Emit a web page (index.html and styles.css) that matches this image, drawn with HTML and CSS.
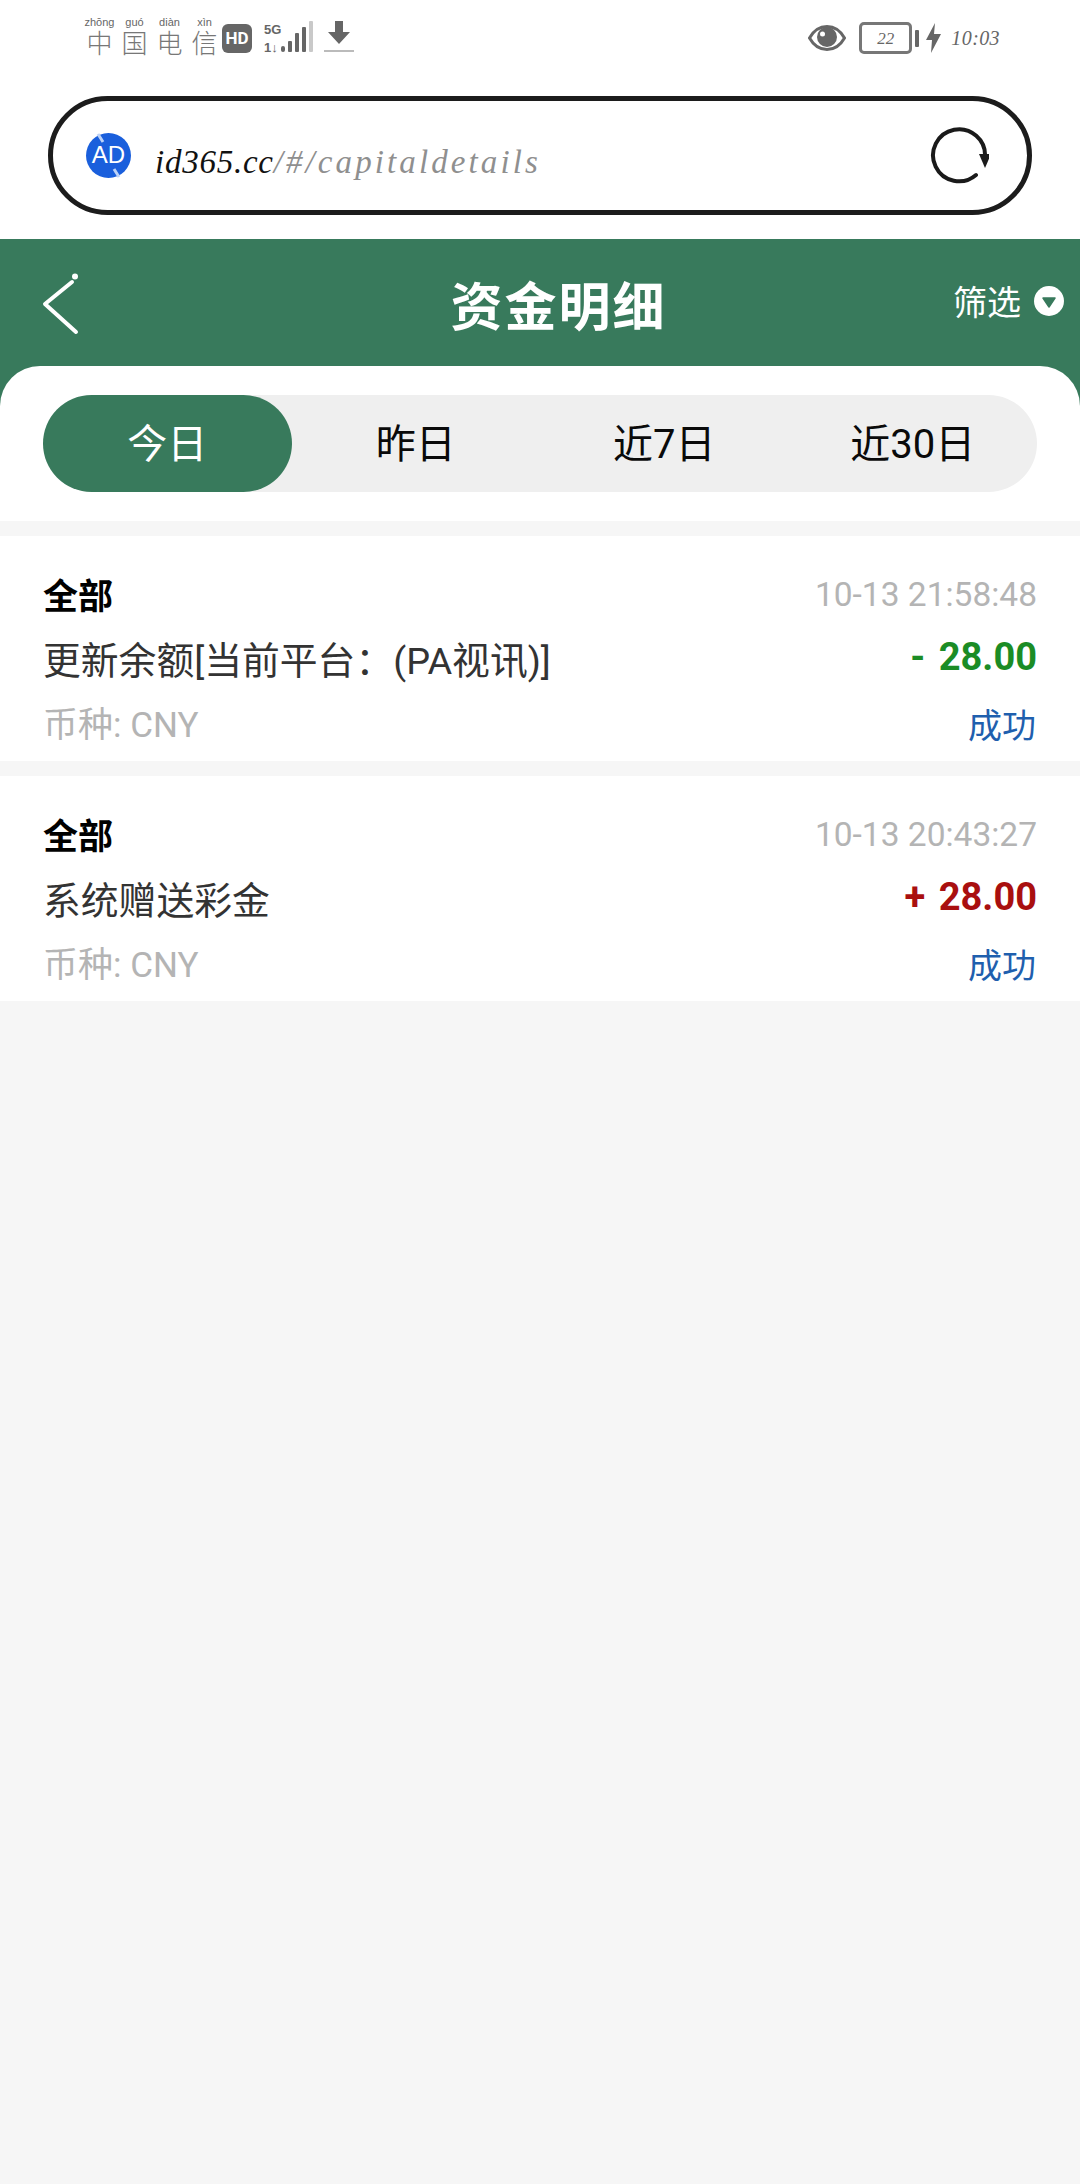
FILE: index.html
```html
<!DOCTYPE html>
<html lang="zh">
<head>
<meta charset="utf-8">
<title>资金明细</title>
<link rel="stylesheet" href="styles.css">
</head>
<body>
<div class="top">
  <div class="status">
    <div class="status-left">
      <div class="carrier">
        <div class="cc"><span class="py">zhōng</span><span class="hz">中</span></div>
        <div class="cc"><span class="py">guó</span><span class="hz">国</span></div>
        <div class="cc"><span class="py">diàn</span><span class="hz">电</span></div>
        <div class="cc"><span class="py">xìn</span><span class="hz">信</span></div>
      </div>
      <span class="hd">HD</span>
      <svg class="signal" width="50" height="34" viewBox="0 0 50 34">
        <text x="0" y="13" class="sig-t">5G</text>
        <text x="0" y="31" class="sig-t">1↓</text>
        <rect x="17" y="25" width="4" height="6" rx="2" fill="#666"/>
        <rect x="24" y="20" width="4" height="11" rx="1" fill="#666"/>
        <rect x="31" y="12" width="4" height="19" rx="1" fill="#666"/>
        <rect x="38" y="6" width="4" height="25" rx="1" fill="#666"/>
        <rect x="45" y="0" width="4" height="31" rx="1" fill="#c9c9c9"/>
      </svg>
      <svg class="dl" width="30" height="32" viewBox="0 0 30 32">
        <path d="M11 0h8v11h7L15 23 4 11h7z" fill="#666"/>
        <rect x="0" y="29" width="30" height="2" fill="#bbb"/>
      </svg>
    </div>
    <div class="status-right">
      <svg width="38" height="28" viewBox="0 0 38 28">
        <path d="M1.500 14C6 6 12 2.500 19 2.500S32 6 36.500 14C32 22 26 25.500 19 25.500S6 22 1.500 14Z" fill="none" stroke="#666" stroke-width="3"/>
        <circle cx="19" cy="13" r="10" fill="#666"/>
        <circle cx="14.500" cy="10" r="2.500" fill="#fff"/>
      </svg>
      <div class="batt"><span>22</span></div>
      <span class="nub"></span>
      <svg width="15" height="30" viewBox="0 0 15 30"><path d="M9 0 0 17h6l-1 13 10-19H8z" fill="#666"/></svg>
      <span class="time">10:03</span>
    </div>
  </div>
  <div class="url">
    <svg class="ad" width="45" height="45" viewBox="0 0 45 45">
      <circle cx="22.500" cy="22.500" r="22.500" fill="#1a5fdc"/>
      <path d="M12 1 17 9M28 36l5 8" stroke="#bcd2f7" stroke-width="3"/>
      <text x="22.500" y="30" class="ad-t">AD</text>
    </svg>
    <div class="url-text"><b>id365.cc</b>/#/capitaldetails</div>
    <svg class="reload" width="60" height="60" viewBox="0 0 60 60">
      <path d="M47 48A26 26 0 1 1 56 30" fill="none" stroke="#1a1a1a" stroke-width="4" stroke-linecap="round"/>
      <path d="M50 27H62L56 41Z" fill="#1a1a1a"/>
    </svg>
  </div>
</div>
<div class="hero">
  <div class="head">
    <div class="back">
      <svg width="42" height="62" viewBox="0 0 42 62">
        <path d="M32 9 5 31 36 59" fill="none" stroke="#fff" stroke-width="4" stroke-linecap="round" stroke-linejoin="round"/>
        <circle cx="35" cy="3.500" r="3" fill="#fff"/>
      </svg>
    </div>
    <div class="title">资金明细</div>
    <div class="filter">
      <span>筛选</span>
      <svg width="30" height="30" viewBox="0 0 30 30">
        <circle cx="15" cy="15" r="15" fill="#fff"/>
        <path d="M9 12H21L15 21Z" fill="#387a5c" stroke="#387a5c" stroke-width="1.500" stroke-linejoin="round"/>
      </svg>
    </div>
  </div>
  <div class="panel">
    <div class="tabs">
      <div class="tab active">今日</div>
      <div class="tab">昨日</div>
      <div class="tab">近7日</div>
      <div class="tab">近30日</div>
    </div>
  </div>
</div>
<div class="list">
  <div class="card">
    <div class="row"><span class="kind">全部</span><span class="date">10-13 21:58:48</span></div>
    <div class="row r2"><span class="desc">更新余额[当前平台：(PA视讯)]</span><span class="amt minus">- 28.00</span></div>
    <div class="row r3"><span class="cur">币种: CNY</span><span class="ok">成功</span></div>
  </div>
  <div class="card">
    <div class="row"><span class="kind">全部</span><span class="date">10-13 20:43:27</span></div>
    <div class="row r2"><span class="desc">系统赠送彩金</span><span class="amt plus">+ 28.00</span></div>
    <div class="row r3"><span class="cur">币种: CNY</span><span class="ok">成功</span></div>
  </div>
</div>
</body>
</html>
```
FILE: styles.css
```css
* { box-sizing: border-box; }
html, body { margin: 0; padding: 0; }
body {
  width: 1080px;
  height: 2184px;
  background: #f6f6f6;
  font-family: Roboto, "Noto Sans CJK SC", sans-serif;
  overflow: hidden;
}
.top { background: #fff; height: 239px; padding-top: 16px; }
.status {
  height: 80px;
  padding: 0 80px 0 82px;
  display: flex;
  justify-content: space-between;
  align-items: flex-start;
}
.status-left { display: flex; align-items: center; height: 40px; }
.carrier { display: flex; margin-top: 1px; margin-right: 2px; }
.cc { width: 35px; display: flex; flex-direction: column; align-items: center; }
.py { font: 11px/11px "Liberation Sans", sans-serif; color: #666; }
.hz { font: 300 26px/28px "Noto Sans CJK SC", sans-serif; color: #777; }
.hd {
  width: 30px; height: 29px; margin: 4px 0 0 -2px;
  background: #666; color: #fff; border-radius: 6px;
  font: 700 17px/29px Roboto, sans-serif; text-align: center;
}
.signal { margin: 4px 0 0 12px; }
.sig-t { font: 700 13px "Liberation Sans", sans-serif; fill: #666; }
.dl { margin: 2px 0 0 10px; }
.status-right { display: flex; align-items: center; height: 40px; margin-top: 2px; }
.batt {
  width: 53px; height: 32px; margin-left: 13px;
  border: 3px solid #777; border-radius: 5px;
  display: flex; align-items: center; justify-content: center;
  font: italic 17px/1 "Liberation Serif", serif; color: #666;
}
.nub { width: 4px; height: 17px; margin: 0 6px 0 3px; background: #666; border-radius: 1px; }
.nub + svg { margin-left: 1px; }
.time {
  margin-left: 10px;
  font: italic 20px/1 "Liberation Serif", serif; color: #666; letter-spacing: 0.4px;
}
.url {
  height: 119px;
  margin: 0 48px;
  border: 5px solid #1c1c1c;
  border-radius: 60px;
  display: flex;
  align-items: center;
  padding: 0 38px 0 33px;
  background: #fff;
}
.reload { margin-top: 2px; }
.ad-t { font: 400 24px "Liberation Sans", sans-serif; fill: #fff; text-anchor: middle; }
.url-text {
  flex: 1;
  margin: 14px 0 0 24px;
  font: italic 33px/1 "Liberation Serif", serif;
  color: #8f8f8f;
  letter-spacing: 3.1px;
}
.url-text b { font-weight: 400; color: #111; letter-spacing: 0.75px; }
.hero { background: #387a5c; }
.head { height: 127px; display: flex; align-items: center; padding: 0 16px 6px 40px; }
.back { width: 124px; flex: none; display: flex; margin-top: 8px; }
.title {
  flex: 1; text-align: center; margin-top: 8px;
  font: 700 52px/1 "Noto Sans CJK SC", sans-serif; color: #fff; letter-spacing: 2px;
}
.filter {
  width: 111px; flex: none; margin-top: 2px;
  display: flex; align-items: center; justify-content: space-between;
  font: 400 34px/1 "Noto Sans CJK SC", sans-serif; color: #fff;
}
.panel {
  background: #fff;
  border-radius: 40px 40px 0 0;
  padding: 29px 43px;
}
.tabs { height: 97px; background: #efefef; border-radius: 49px; display: flex; }
.tab {
  flex: 1;
  display: flex; align-items: center; justify-content: center;
  padding-top: 2px;
  font: 400 40px/1 Roboto, "Noto Sans CJK SC", sans-serif; color: #0a0a0a;
  border-radius: 49px;
}
.tab.active { background: #387a5c; color: #fff; }
.list { padding-top: 15px; display: flex; flex-direction: column; gap: 15px; }
.card { background: #fff; height: 225px; padding: 38px 43px 0; }
.row { display: flex; justify-content: space-between; align-items: center; height: 42px; }
.r2 { margin-top: 20px; }
.r3 { margin-top: 26px; }
.kind { font: 700 35px/42px "Noto Sans CJK SC", sans-serif; color: #000; margin-top: -2px; }
.date { font: 400 33.500px/42px Roboto, sans-serif; color: #b4b4b4; }
.desc { font: 400 37.800px/42px Roboto, "Noto Sans CJK SC", sans-serif; color: #333; margin-top: 8px; }
.amt { font: 700 38px/42px Roboto, sans-serif; word-spacing: 4px; }
.minus { color: #1b8c25; }
.plus { color: #a90f0f; }
.cur { font: 400 35px/42px Roboto, "Noto Sans CJK SC", sans-serif; color: #b4b4b4; margin-top: 2px; }
.ok { font: 400 34px/42px "Noto Sans CJK SC", sans-serif; color: #1f5fae; margin: -2px 1px 0 0; }
```
